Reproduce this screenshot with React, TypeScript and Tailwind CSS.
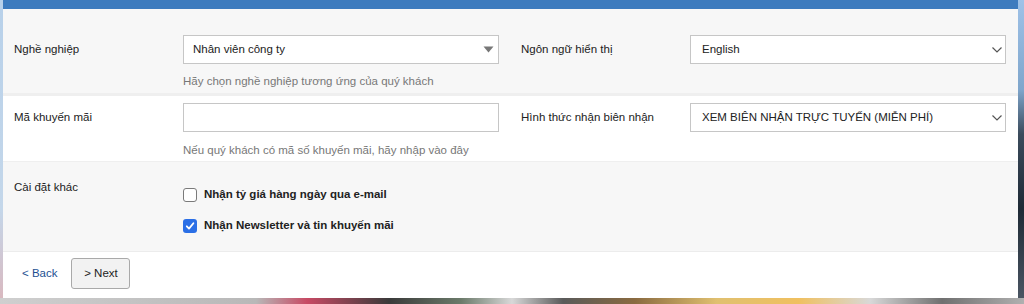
import React from "react";

function Chevron() {
  return (
    <svg width="12" height="8" viewBox="0 0 12 8" className="text-[#555]">
      <path d="M1.5 1.5 L6 6 L10.5 1.5" fill="none" stroke="currentColor" strokeWidth="1.2" />
    </svg>
  );
}

function Triangle() {
  return (
    <svg width="11" height="7" viewBox="0 0 11 7">
      <path d="M0.5 0.5 L10.5 0.5 L5.5 6.5 Z" fill="#777" />
    </svg>
  );
}

function Field({ value, icon }: { value?: string; icon?: "triangle" | "chevron" }) {
  return (
    <div className="flex h-[29px] w-[316px] items-center justify-between border border-[#c6c6c6] bg-white text-[11.5px] text-[#222]">
      <span className={icon === "chevron" ? "pl-[11px]" : "pl-[9px]"}>{value}</span>
      {icon === "triangle" && (
        <span className="pr-[4px]">
          <Triangle />
        </span>
      )}
      {icon === "chevron" && (
        <span className="pr-[2px]">
          <Chevron />
        </span>
      )}
    </div>
  );
}

function Check({ checked, label }: { checked?: boolean; label: string }) {
  return (
    <div className="flex h-[14px] items-center">
      {checked ? (
        <span className="flex h-[14px] w-[14px] items-center justify-center rounded-[3px] bg-[#2b6fe6]">
          <svg width="10" height="10" viewBox="0 0 10 10">
            <path d="M1.8 5.3 L4 7.6 L8.4 2.2" fill="none" stroke="white" strokeWidth="1.8" strokeLinecap="round" strokeLinejoin="round" />
          </svg>
        </span>
      ) : (
        <span className="h-[14px] w-[14px] rounded-[3px] border border-[#7a7a7a] bg-white" />
      )}
      <span className="pl-[7px] text-[11.5px] font-bold text-[#222]">{label}</span>
    </div>
  );
}

export default function App() {
  return (
    <div className="flex h-[304px] w-[1024px] flex-col overflow-hidden font-['Liberation_Sans',Arial,sans-serif]">
      <div className="flex h-[298px]">
        <div className="w-[3px] bg-[linear-gradient(180deg,#b8d1ea_0%,#c4d7ea_70%,#d9b9c0_100%)]" />
        <div className="flex w-[1015px] flex-col bg-white">
          <div className="h-[9px] bg-[#3d7bbe]" />

          {/* row 1 */}
          <div className="flex h-[84px] bg-[#f7f7f7]">
            <div className="flex w-[507px] pl-[11px] pt-[26px]">
              <div className="flex h-[29px] w-[169px] items-center text-[11.5px] text-[#222]">Nghề nghiệp</div>
              <div className="flex flex-col">
                <Field value="Nhân viên công ty" icon="triangle" />
                <div className="pt-[9px] text-[11.5px] leading-[16px] text-[#777]">
                  Hãy chọn nghề nghiệp tương ứng của quý khách
                </div>
              </div>
            </div>
            <div className="flex w-[507px] pl-[11px] pt-[26px]">
              <div className="flex h-[29px] w-[169px] items-center text-[11.5px] text-[#222]">Ngôn ngữ hiển thị</div>
              <Field value="English" icon="chevron" />
            </div>
          </div>
          <div className="h-[3px] bg-[#efefef]" />

          {/* row 2 */}
          <div className="flex h-[65px] bg-white">
            <div className="flex w-[507px] pl-[11px] pt-[7px]">
              <div className="flex h-[29px] w-[169px] items-center text-[11.5px] text-[#222]">Mã khuyến mãi</div>
              <div className="flex flex-col">
                <Field />
                <div className="pt-[10px] text-[11.5px] leading-[16px] text-[#777]">
                  Nếu quý khách có mã số khuyến mãi, hãy nhập vào đây
                </div>
              </div>
            </div>
            <div className="flex w-[507px] pl-[11px] pt-[7px]">
              <div className="flex h-[29px] w-[169px] items-center text-[11.5px] text-[#222]">Hình thức nhận biên nhận</div>
              <Field value="XEM BIÊN NHẬN TRỰC TUYẾN (MIỄN PHÍ)" icon="chevron" />
            </div>
          </div>

          {/* row 3 */}
          <div className="flex h-[90px] border-t border-[#efefef] bg-[#f7f7f7] pl-[11px] pt-[17px]">
            <div className="w-[169px] text-[11.5px] leading-[16px] text-[#222]">Cài đặt khác</div>
            <div className="flex flex-col gap-[17px] pt-[9px]">
              <Check label="Nhận tỷ giá hàng ngày qua e-mail" />
              <Check checked label="Nhận Newsletter và tin khuyến mãi" />
            </div>
          </div>
          <div className="h-[1px] bg-[#ececec]" />

          {/* row 4 */}
          <div className="flex flex-1 items-start gap-[14px] pl-[19px] pt-[6px]">
            <a className="flex h-[31px] items-center text-[11.5px] text-[#1d4f91]">&lt; Back</a>
            <button className="flex h-[31px] w-[59px] items-center justify-center rounded-[3px] border border-[#a9a9a9] bg-[#f2f2f2] text-[11.5px] text-[#222]">
              &gt; Next
            </button>
          </div>
        </div>
        <div className="w-[6px] bg-[linear-gradient(180deg,#9fc2e8_0%,#7fa6cc_30%,#3b4b5c_45%,#1e2a36_70%,#4a5562_100%)]" />
      </div>
      <div className="h-[6px] bg-[linear-gradient(90deg,#cfcfcf_0%,#b8b8b8_25%,#c74a64_30%,#3a3a3a_38%,#6b7a6a_45%,#d8d8d8_50%,#5a5a5a_55%,#8a6a40_62%,#e0c070_70%,#f0c060_78%,#d8d8d8_85%,#707070_92%,#b0b0b0_100%)]" />
    </div>
  );
}
